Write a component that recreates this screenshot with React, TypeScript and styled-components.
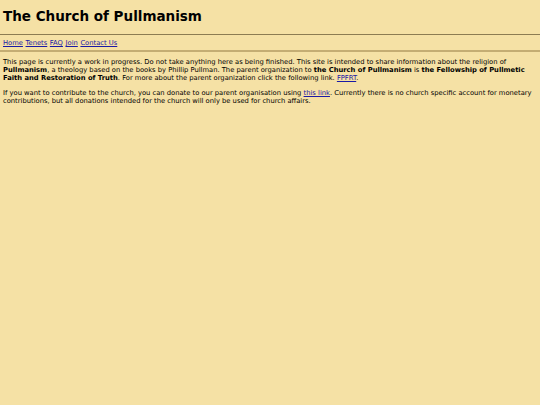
import React from "react";
import styled, { createGlobalStyle } from "styled-components";

const Global = createGlobalStyle`
html, body {
  margin: 0;
  padding: 0;
  background-color: #f5e1a5;
}
body {
  font-family: "DejaVu Sans", Verdana, sans-serif;
  color: #000000;
}
`;

const App = () => {
  return (
    <Page>
      <Global />
      <Header>
        <Title>The Church of Pullmanism</Title>
      </Header>
      <Nav>
        <NavLink href="#">Home</NavLink>
        <NavLink href="#">Tenets</NavLink>
        <NavLink href="#">FAQ</NavLink>
        <NavLink href="#">Join</NavLink>
        <NavLink href="#">Contact Us</NavLink>
      </Nav>
      <Content>
        <Para>
          This page is currently a work in progress. Do not take anything here as being finished. This site is intended
          to share information about the religion of <b>Pullmanism</b>, a theology based on the books by Phillip
          Pullman. The parent organization to <b>the Church of Pullmanism</b> is{" "}
          <b>the Fellowship of Pullmetic Faith and Restoration of Truth</b>. For more about the parent organization
          click the following link. <TextLink href="#">FPFRT</TextLink>.
        </Para>
        <Para>
          If you want to contribute to the church, you can donate to our parent organisation using{" "}
          <TextLink href="#">this link</TextLink>. Currently there is no church specific account for monetary
          contributions, but all donations intended for the church will only be used for church affairs.
        </Para>
      </Content>
    </Page>
  );
};

export default App;

const Page = styled.div`
min-height: 405px;
background-color: #f5e1a5;
`;

const Header = styled.div`
padding: 9px 3px 10px 3px;
border-bottom: 1px solid #8c7c52;
`;

const Title = styled.h1`
margin: 0;
font-size: 13.5px;
line-height: 15px;
font-weight: 700;
`;

const Nav = styled.div`
display: flex;
gap: 2.6px;
padding: 4px 3px 3px 3px;
border-bottom: 2px solid #c4ad73;
font-size: 6.75px;
line-height: 8px;
`;

const NavLink = styled.a`
color: #1a1aa6;
text-decoration: underline;
`;

const Content = styled.div`
padding: 6px 3px 0 3px;
`;

const Para = styled.p`
margin: 0 0 7px 0;
font-size: 6.75px;
line-height: 8px;
`;

const TextLink = styled.a`
color: #1a1aa6;
text-decoration: underline;
`;
